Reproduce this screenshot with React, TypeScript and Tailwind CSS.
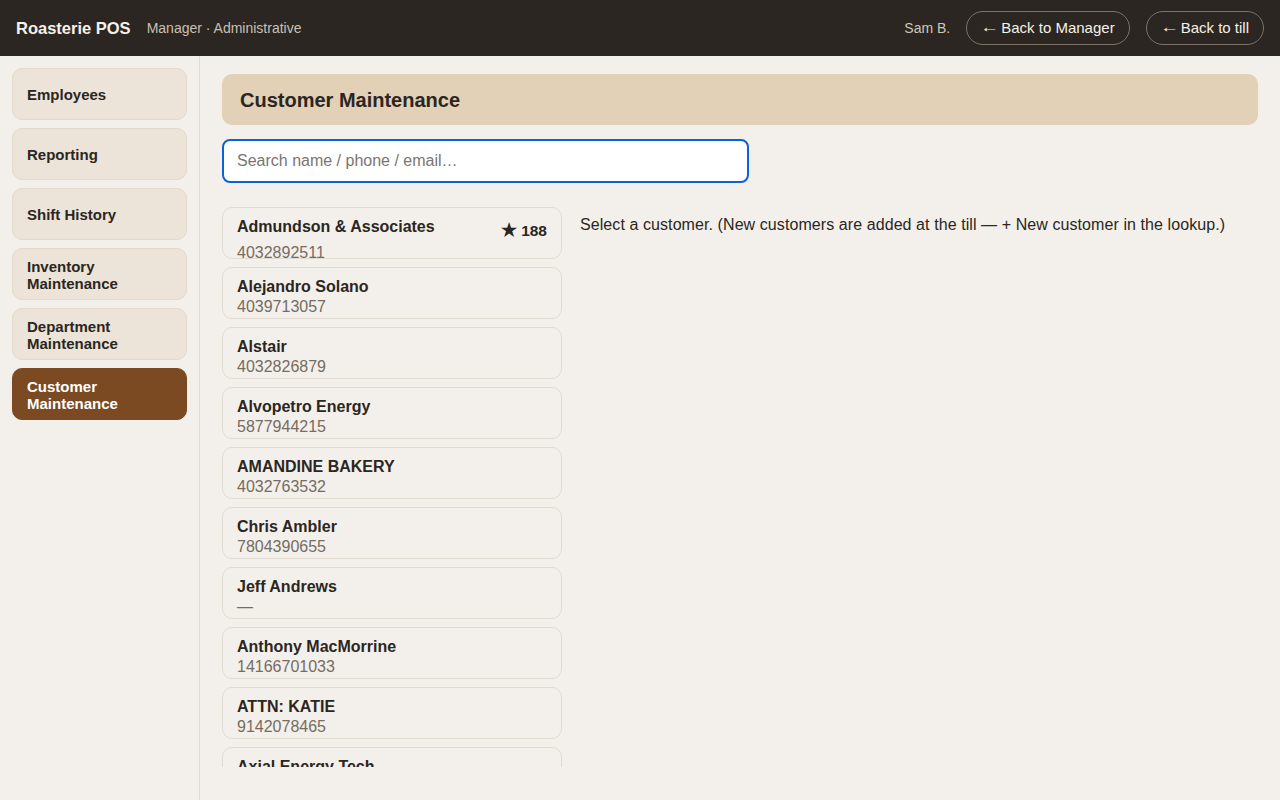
const nav = [
  { label: "Employees" },
  { label: "Reporting" },
  { label: "Shift History" },
  { label: "Inventory Maintenance" },
  { label: "Department Maintenance" },
  { label: "Customer Maintenance", active: true },
];

const customers = [
  { name: "Admundson & Associates", phone: "4032892511", points: 188 },
  { name: "Alejandro Solano", phone: "4039713057" },
  { name: "Alstair", phone: "4032826879" },
  { name: "Alvopetro Energy", phone: "5877944215" },
  { name: "AMANDINE BAKERY", phone: "4032763532" },
  { name: "Chris Ambler", phone: "7804390655" },
  { name: "Jeff Andrews", phone: "—" },
  { name: "Anthony MacMorrine", phone: "14166701033" },
  { name: "ATTN: KATIE", phone: "9142078465" },
  { name: "Axial Energy Tech", phone: "4035550192" },
];

export default function App() {
  return (
    <div className="flex h-[800px] flex-col overflow-hidden bg-[#f3f0eb] font-['Liberation_Sans',Arial,sans-serif] text-[#2b2621]">
      <header className="flex h-[56px] shrink-0 items-center bg-[#2b2621] px-4">
        <span className="text-[16.5px] font-bold text-[#f5f0e8]">Roasterie POS</span>
        <span className="ml-4 text-[14px] text-[#c9c0b3]">Manager · Administrative</span>
        <div className="ml-auto flex items-center gap-4">
          <span className="text-[14px] text-[#cfc6b8]">Sam B.</span>
          <button className="flex h-[34px] items-center rounded-full border border-[#7d7368] pr-[14px] pl-[15px] text-[15px] text-[#f5f0e8]">
            <span className="mr-[4px] inline-block -translate-y-[1px] scale-x-125">←</span>Back to Manager
          </button>
          <button className="flex h-[34px] items-center rounded-full border border-[#7d7368] pr-[14px] pl-[15px] text-[15px] text-[#f5f0e8]">
            <span className="mr-[4px] inline-block -translate-y-[1px] scale-x-125">←</span>Back to till
          </button>
        </div>
      </header>

      <div className="flex min-h-0 flex-1">
        <aside className="flex w-[200px] shrink-0 flex-col gap-2 border-r border-[#e0d9cf] px-3 pt-3">
          {nav.map((n) => (
            <button
              key={n.label}
              className={
                n.active
                  ? "flex h-[52px] items-center rounded-[10px] border border-[#7b4a22] bg-[#7b4a22] px-[14px] pt-[1px] text-left text-[15px] leading-[17px] font-bold text-white"
                  : "flex h-[52px] items-center rounded-[10px] border border-[#e3d9cc] bg-[#ece4d9] px-[14px] pt-[1px] text-left text-[15px] leading-[17px] font-bold text-[#2b2621]"
              }
            >
              <span className="w-[110px]">{n.label}</span>
            </button>
          ))}
        </aside>

        <main className="flex min-w-0 flex-1 flex-col px-[22px] pt-[18px] pb-[33px]">
          <div className="flex h-[51px] shrink-0 items-center rounded-[10px] bg-[#e2d1b6] px-[18px]">
            <h1 className="text-[20px] font-bold">Customer Maintenance</h1>
          </div>

          <input
            className="mt-[14px] h-[44px] w-[527px] shrink-0 rounded-[8px] border-2 border-[#0b62d6] bg-white px-[13px] text-[16px] outline-none placeholder:text-[#7a7570]"
            placeholder="Search name / phone / email…"
          />

          <div className="mt-6 flex min-h-0 flex-1 gap-[18px]">
            <ul className="flex w-[340px] shrink-0 flex-col gap-2 overflow-hidden">
              {customers.map((c) => (
                <li
                  key={c.name}
                  className="h-[52px] shrink-0 rounded-[10px] border border-[#e2dbd1] px-[14px] pt-[9px]"
                >
                  <div className={c.points ? "flex h-[26px] items-start justify-between" : "flex h-[20px] items-center"}>
                    <span className="text-[16px] leading-[20px] font-bold">{c.name}</span>
                    {c.points && (
                      <span className="text-[15.5px] leading-[26px] font-bold">
                        <span className="text-[18px]">★</span> {c.points}
                      </span>
                    )}
                  </div>
                  <div className="text-[16px] leading-[20px] text-[#766c62]">{c.phone}</div>
                </li>
              ))}
            </ul>
            <p className="pt-[8px] text-[16px] leading-[20px] tracking-[0.08px]">
              Select a customer. (New customers are added at the till — + New customer in the lookup.)
            </p>
          </div>
        </main>
      </div>
    </div>
  );
}
